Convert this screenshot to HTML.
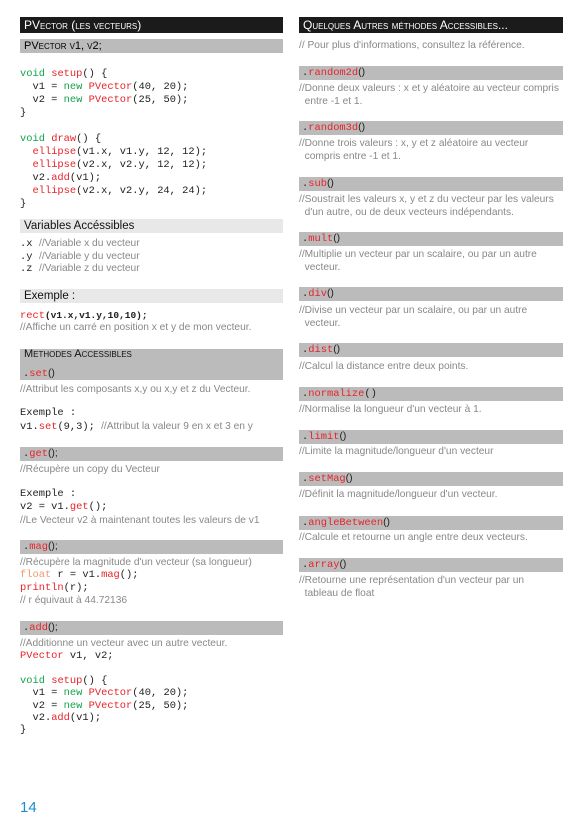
<!DOCTYPE html>
<html><head><meta charset="utf-8"><style>
*{margin:0;padding:0;box-sizing:border-box}
body{width:583px;height:827px;background:#fff;position:relative;overflow:hidden;font-family:"Liberation Sans",sans-serif}
.a{position:absolute;white-space:pre;line-height:13px}
.c{font-family:"Liberation Mono",monospace;font-size:10.4px;color:#222}
.m{font-size:10.2px;color:#888;letter-spacing:0}
.bk{position:absolute;background:#1b1b1b;color:#fff;height:16px;font-size:12px;line-height:16px;padding-left:4px}
.g{position:absolute;background:#bbb;height:14px;left:20px;width:263px}
.gr{position:absolute;background:#bbb;height:14px;left:299px;width:264px}
.lg{position:absolute;background:#e8e8e8;height:14px;left:20px;width:263px;font-size:11.5px;line-height:14px;padding-left:4px;color:#111}
.r{color:#e8232a}.gn{color:#12a34a}.o{color:#f39a6a}
.sc{font-variant:small-caps}
.bt{font-family:"Liberation Mono",monospace;font-size:10.4px;line-height:14px;padding-left:3px;color:#222}
.bt span.p{font-family:"Liberation Sans",sans-serif}
</style></head><body>
<div class="bk sc" style="left:20px;top:17px;width:263px">PVector (les vecteurs)</div>
<div class="g sc" style="top:39px;font-size:11px;line-height:14px;padding-left:4px">PVector v1, v2;</div>

<div class="a c" style="left:20px;top:68px"><span class="gn">void</span> <span class="r">setup</span>() {
  v1 = <span class="gn">new</span> <span class="r">PVector</span>(40, 20);
  v2 = <span class="gn">new</span> <span class="r">PVector</span>(25, 50);
}

<span class="gn">void</span> <span class="r">draw</span>() {
  <span class="r">ellipse</span>(v1.x, v1.y, 12, 12);
  <span class="r">ellipse</span>(v2.x, v2.y, 12, 12);
  v2.<span class="r">add</span>(v1);
  <span class="r">ellipse</span>(v2.x, v2.y, 24, 24);
}</div>

<div class="lg" style="top:219px">Variables Accéssibles</div>
<div class="a c" style="left:20px;top:238px;line-height:12.5px">.x
.y
.z</div>
<div class="a m" style="left:39px;top:238px;line-height:12.5px">//Variable x du vecteur
//Variable y du vecteur
//Variable z du vecteur</div>

<div class="lg" style="top:289px">Exemple :</div>
<div class="a c" style="left:20px;top:309px"><span class="r">rect</span><b style="font-size:9.5px">(v1.x,v1.y,10,10);</b></div>
<div class="a m" style="left:20px;top:321px">//Affiche un carré en position x et y de mon vecteur.</div>

<div class="g" style="top:349px;height:31px"></div>
<div class="a sc" style="left:24px;top:348px;font-size:11px;color:#111">Methodes Accessibles</div>
<div class="a c" style="left:23px;top:367px"><span class="r"><span style="color:#222">.</span>set</span><span style="font-family:'Liberation Sans'">()</span></div>
<div class="a m" style="left:20px;top:383px">//Attribut les composants x,y ou x,y et z du Vecteur.</div>
<div class="a c" style="left:20px;top:407px">Exemple :
v1.<span class="r">set</span>(9,3); <span class="m" style="font-family:'Liberation Sans'">//Attribut la valeur 9 en x et 3 en y</span></div>

<div class="g bt" style="top:447px">.<span class="r">get</span><span class="p">();</span></div>
<div class="a m" style="left:20px;top:463px">//Récupère un copy du Vecteur</div>
<div class="a c" style="left:20px;top:488px">Exemple :
v2 = v1.<span class="r">get</span>();</div>
<div class="a m" style="left:20px;top:514px">//Le Vecteur v2 à maintenant toutes les valeurs de v1</div>

<div class="g bt" style="top:540px">.<span class="r">mag</span><span class="p">();</span></div>
<div class="a m" style="left:20px;top:556px">//Récupère la magnitude d'un vecteur (sa longueur)</div>
<div class="a c" style="left:20px;top:569px;line-height:12.5px"><span class="o">float</span> r = v1.<span class="r">mag</span>();
<span class="r">println</span>(r);</div>
<div class="a m" style="left:20px;top:594px">// r équivaut à 44.72136</div>

<div class="g bt" style="top:621px">.<span class="r">add</span><span class="p">();</span></div>
<div class="a m" style="left:20px;top:637px">//Additionne un vecteur avec un autre vecteur.</div>
<div class="a c" style="left:20px;top:650px;line-height:12.4px"><span class="r">PVector</span> v1, v2;

<span class="gn">void</span> <span class="r">setup</span>() {
  v1 = <span class="gn">new</span> <span class="r">PVector</span>(40, 20);
  v2 = <span class="gn">new</span> <span class="r">PVector</span>(25, 50);
  v2.<span class="r">add</span>(v1);
}</div>

<div class="a" style="left:20px;top:799px;font-size:15px;line-height:18px;color:#1c8fcf">14</div>

<!-- right column -->
<div class="bk sc" style="left:299px;top:17px;width:264px">Quelques Autres méthodes Accessibles...</div>
<div class="a m" style="left:299px;top:39px">// Pour plus d'informations, consultez la référence.</div>

<div class="gr bt" style="top:66px">.<span class="r">random2d</span><span class="p">()</span></div>
<div class="a m" style="left:299px;top:82px">//Donne deux valeurs : x et y aléatoire au vecteur compris
  entre -1 et 1.</div>
<div class="gr bt" style="top:121px">.<span class="r">random3d</span><span class="p">()</span></div>
<div class="a m" style="left:299px;top:137px">//Donne trois valeurs : x, y et z aléatoire au vecteur
  compris entre -1 et 1.</div>
<div class="gr bt" style="top:177px">.<span class="r">sub</span><span class="p">()</span></div>
<div class="a m" style="left:299px;top:193px">//Soustrait les valeurs x, y et z du vecteur par les valeurs
  d'un autre, ou de deux vecteurs indépendants.</div>
<div class="gr bt" style="top:232px">.<span class="r">mult</span><span class="p">()</span></div>
<div class="a m" style="left:299px;top:248px">//Multiplie un vecteur par un scalaire, ou par un autre
  vecteur.</div>
<div class="gr bt" style="top:287px">.<span class="r">div</span><span class="p">()</span></div>
<div class="a m" style="left:299px;top:304px">//Divise un vecteur par un scalaire, ou par un autre
  vecteur.</div>
<div class="gr bt" style="top:343px">.<span class="r">dist</span><span class="p">()</span></div>
<div class="a m" style="left:299px;top:360px">//Calcul la distance entre deux points.</div>
<div class="gr bt" style="top:387px">.<span class="r">normalize</span>()</div>
<div class="a m" style="left:299px;top:403px">//Normalise la longueur d'un vecteur à 1.</div>
<div class="gr bt" style="top:430px">.<span class="r">limit</span><span class="p">()</span></div>
<div class="a m" style="left:299px;top:445px">//Limite la magnitude/longueur d'un vecteur</div>
<div class="gr bt" style="top:472px">.<span class="r">setMag</span><span class="p">()</span></div>
<div class="a m" style="left:299px;top:488px">//Définit la magnitude/longueur d'un vecteur.</div>
<div class="gr bt" style="top:516px">.<span class="r">angleBetween</span><span class="p">()</span></div>
<div class="a m" style="left:299px;top:531px">//Calcule et retourne un angle entre deux vecteurs.</div>
<div class="gr bt" style="top:558px">.<span class="r">array</span><span class="p">()</span></div>
<div class="a m" style="left:299px;top:574px">//Retourne une représentation d'un vecteur par un
  tableau de float</div>
</body></html>
